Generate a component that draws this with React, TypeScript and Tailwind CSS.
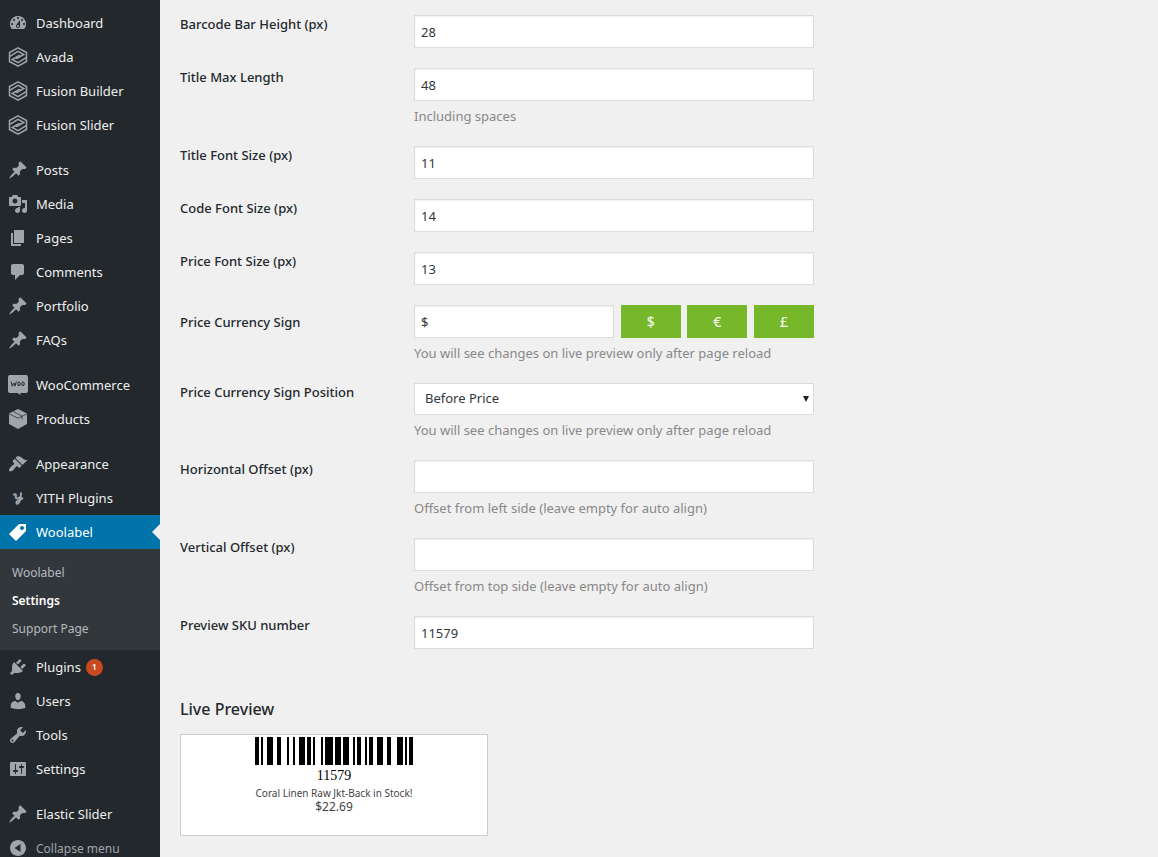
import React from 'react';
import clsx from 'clsx';

const ICONS: Record<string, string> = {
  dashboard:
    'M3.76 16h12.48A7.998 7.998 0 0 0 10 3a7.998 7.998 0 0 0-6.24 13zM10 4c.55 0 1 .45 1 1s-.45 1-1 1-1-.45-1-1 .45-1 1-1zM6 6c.55 0 1 .45 1 1s-.45 1-1 1-1-.45-1-1 .45-1 1-1zm8 0c.55 0 1 .45 1 1s-.45 1-1 1-1-.45-1-1 .45-1 1-1zm-5.37 5.55L12 7v6c0 1.1-.9 2-2 2s-2-.9-2-2c0-.57.24-1.08.63-1.45zM4 10c.55 0 1 .45 1 1s-.45 1-1 1-1-.45-1-1 .45-1 1-1zm12 0c.55 0 1 .45 1 1s-.45 1-1 1-1-.45-1-1 .45-1 1-1zm-5 3c0-.55-.45-1-1-1s-1 .45-1 1 .45 1 1 1 1-.45 1-1z',
  pin: 'M10.44 3.02l1.82-1.82 6.36 6.35-1.83 1.82c-1.05-.68-2.48-.57-3.41.36l-.75.75c-.92.93-1.04 2.35-.35 3.41l-1.83 1.82-2.41-2.41-2.8 2.79c-.42.42-3.38 2.71-3.8 2.29s1.86-3.39 2.28-3.81l2.79-2.79L4.1 9.36l1.83-1.82c1.05.69 2.48.57 3.4-.36l.75-.75c.93-.92 1.05-2.35.36-3.41z',
  media:
    'M13 11V4c0-.55-.45-1-1-1h-1.67L9 1H5L3.67 3H2c-.55 0-1 .45-1 1v7c0 .55.45 1 1 1h10c.55 0 1-.45 1-1zM7 4.5c1.38 0 2.5 1.12 2.5 2.5S8.38 9.5 7 9.5 4.5 8.38 4.5 7 5.62 4.5 7 4.5zM14 6h5v10.5c0 1.38-1.12 2.5-2.5 2.5S14 17.88 14 16.5s1.12-2.5 2.5-2.5c.17 0 .34.02.5.05V9h-3V6zm-4 8.05V13h2v3.5c0 1.38-1.12 2.5-2.5 2.5S7 17.88 7 16.5 8.12 14 9.5 14c.17 0 .34.02.5.05z',
  page: 'M6 15V2h10v13H6zm-1 1h8v2H3V5h2v11z',
  comment: 'M5 2h9c1.1 0 2 .9 2 2v7c0 1.1-.9 2-2 2h-2l-5 5v-5H5c-1.1 0-2-.9-2-2V4c0-1.1.9-2 2-2z',
  brush:
    'M14.48 11.06L7.41 3.99l1.5-1.5c.5-.56 2.3-.47 3.51.32 1.21.8 1.43 1.28 2.91 2.1 1.18.64 2.45 1.26 4.45.85zm-.71.71L6.7 4.7 4.93 6.47c-.39.39-.39 1.02 0 1.41l1.06 1.06c.39.39.39 1.03 0 1.42-.6.6-1.43 1.11-2.21 1.69-.35.26-.7.53-1.01.84C1.43 14.23.4 16.08 1.4 17.07c.99 1 2.84-.03 4.18-1.36.31-.31.58-.66.85-1.02.57-.78 1.08-1.61 1.69-2.21.39-.39 1.02-.39 1.41 0l1.06 1.06c.39.39 1.02.39 1.41 0z',
  tag: 'M11 2h7v7L8 19l-7-7zm3 6c1.1 0 2-.9 2-2s-.9-2-2-2-2 .9-2 2 .9 2 2 2z',
  plug: 'M13.11 4.36L9.87 7.6 8 5.73l3.24-3.24c.35-.34 1.05-.2 1.56.32.52.51.66 1.21.31 1.55zm-8 1.77l.91-1.12 9.01 9.01-1.19.84c-.71.71-2.63 1.16-3.82 1.16H6.14L4.9 17.26c-.59.59-1.54.59-2.12 0-.59-.58-.59-1.53 0-2.12l1.24-1.24v-3.88c0-1.13.4-3.19 1.09-3.89zm7.26 3.97l3.24-3.24c.34-.35 1.04-.21 1.55.31.52.51.66 1.21.31 1.55l-3.24 3.25z',
  user: 'M10 9.25c-2.27 0-2.73-3.44-2.73-3.44C7 4.02 7.82 2 9.97 2c2.16 0 2.98 2.02 2.71 3.81 0 0-.41 3.44-2.68 3.44zm0 2.57L12.72 10c2.39 0 4.52 2.33 4.52 4.53v2.49s-3.65 1.13-7.24 1.13c-3.65 0-7.24-1.13-7.24-1.13v-2.49c0-2.25 1.94-4.48 4.47-4.48z',
  wrench:
    'M16.68 9.77c-1.34 1.34-3.3 1.67-4.95.99l-5.41 6.52c-.99.99-2.59.99-3.58 0s-.99-2.59 0-3.57l6.52-5.42c-.68-1.65-.35-3.61.99-4.95 1.28-1.28 3.12-1.62 4.72-1.06l-2.89 2.89 2.82 2.82 2.86-2.87c.53 1.58.18 3.39-1.08 4.65zM3.81 16.21c.4.39 1.04.39 1.43 0 .4-.4.4-1.04 0-1.43-.39-.4-1.03-.4-1.43 0-.39.39-.39 1.03 0 1.43z',
  sliders:
    'M18 16V4c0-.55-.45-1-1-1H3c-.55 0-1 .45-1 1v12c0 .55.45 1 1 1h14c.55 0 1-.45 1-1zM8 11h1c.55 0 1 .45 1 1s-.45 1-1 1H8v1.5c0 .28-.22.5-.5.5s-.5-.22-.5-.5V13H6c-.55 0-1-.45-1-1s.45-1 1-1h1V5.5c0-.28.22-.5.5-.5s.5.22.5.5V11zm5-2h-1c-.55 0-1-.45-1-1s.45-1 1-1h1V5.5c0-.28.22-.5.5-.5s.5.22.5.5V7h1c.55 0 1 .45 1 1s-.45 1-1 1h-1v5.500c0 .28-.22.5-.5.5s-.5-.22-.5-.5V9z',
  collapse:
    'M10 2c4.42 0 8 3.58 8 8s-3.58 8-8 8-8-3.58-8-8 3.58-8 8-8zm2.5 12V6L6.5 10z',
};

const MenuIcon: React.FC<{ name: string }> = ({ name }) => {
  if (name === 'fusion') {
    return (
      <svg viewBox="0 0 20 20" className="size-5" fill="none" stroke="currentColor" strokeWidth="1.5">
        <path d="M10 .9l8.500 4.600v9L10 19.100l-8.500-4.600v-9z" />
        <path d="M1.800 9.300L10 4.300l5.800 3.200L9 11.400 7.400 10.500" />
        <path d="M18.200 10.700L10 15.700l-5.800-3.200L11 8.600l1.600.9" />
      </svg>
    );
  }
  if (name === 'woo') {
    return (
      <svg viewBox="0 0 20 20" className="size-5">
        <path fill="currentColor" d="M2 0h16a2 2 0 0 1 2 2v14a2 2 0 0 1-2 2h-5.500v2L9.500 18H2a2 2 0 0 1-2-2V2a2 2 0 0 1 2-2z" />
        <g fill="none" stroke="#23282d" strokeWidth="1">
          <path d="M3.200 6.600l1 4.600 1.800-3.200.9 3.200L8.400 6.400" />
          <ellipse cx="11" cy="8.800" rx="1.200" ry="1.900" />
          <ellipse cx="15" cy="8.800" rx="1.200" ry="1.900" />
        </g>
      </svg>
    );
  }
  if (name === 'box') {
    return (
      <svg viewBox="0 0 20 20" className="size-5">
        <path fill="currentColor" d="M10 0l9 4.600v10.400L10 20l-9-5V4.600z" />
        <path fill="none" stroke="#23282d" strokeWidth=".7" d="M1 4.800l9 4.400 9-4.400M5.400 2.600l8.600 4.600v3.200" />
      </svg>
    );
  }
  if (name === 'yith') {
    return (
      <svg viewBox="0 0 20 20" className="size-5" fill="none" strokeLinecap="round">
        <circle cx="10" cy="10" r="7.500" fill="#1f2a36" />
        <path stroke="currentColor" strokeWidth="2" d="M6 6.600c2-1.200 2.200.4 1.800 2.400-.2 2 2.200 2 4 .2M13 5.200c-.2 3.600-.6 9.600-3.200 10.400-1.600.4-2-1.400-.4-2.400 1.400-.9 3.200-1.400 5-3" />
      </svg>
    );
  }
  return (
    <svg viewBox="0 0 20 20" className="size-5" fill="currentColor" fillRule="evenodd">
      <path d={ICONS[name]} />
    </svg>
  );
};

interface MenuEntry {
  label: string;
  icon: string;
  current?: boolean;
  count?: number;
  sub?: string[];
}

const MENU: MenuEntry[][] = [
  [
    { label: 'Dashboard', icon: 'dashboard' },
    { label: 'Avada', icon: 'fusion' },
    { label: 'Fusion Builder', icon: 'fusion' },
    { label: 'Fusion Slider', icon: 'fusion' },
  ],
  [
    { label: 'Posts', icon: 'pin' },
    { label: 'Media', icon: 'media' },
    { label: 'Pages', icon: 'page' },
    { label: 'Comments', icon: 'comment' },
    { label: 'Portfolio', icon: 'pin' },
    { label: 'FAQs', icon: 'pin' },
  ],
  [
    { label: 'WooCommerce', icon: 'woo' },
    { label: 'Products', icon: 'box' },
  ],
  [
    { label: 'Appearance', icon: 'brush' },
    { label: 'YITH Plugins', icon: 'yith' },
    { label: 'Woolabel', icon: 'tag', current: true, sub: ['Woolabel', 'Settings', 'Support Page'] },
    { label: 'Plugins', icon: 'plug', count: 1 },
    { label: 'Users', icon: 'user' },
    { label: 'Tools', icon: 'wrench' },
    { label: 'Settings', icon: 'sliders' },
  ],
  [{ label: 'Elastic Slider', icon: 'pin' }],
];

const Sidebar: React.FC = () => (
  <nav className="w-40 shrink-0 bg-[#23282d] pt-[6px] text-[13px] text-[#eeeeee]">
    <ul className="flex flex-col gap-[11px]">
      {MENU.map((group, i) => (
        <li key={i}>
          <ul>
            {group.map((item) => (
              <li key={item.label}>
                <a
                  href="#"
                  className={clsx(
                    'relative flex h-[34px] items-center gap-2 pl-2',
                    item.current && 'bg-[#0073aa] text-white'
                  )}
                >
                  <span className={item.current ? 'text-white' : 'text-[#a0a5aa]'}>
                    <MenuIcon name={item.icon} />
                  </span>
                  <span className="pt-px">{item.label}</span>
                  {item.count && (
                    <span className="-ml-[3px] flex size-[17px] items-center justify-center rounded-full bg-[#ca4a1f] text-[9px] font-semibold text-white">
                      {item.count}
                    </span>
                  )}
                  {item.current && (
                    <span className="absolute right-0 top-[9px] border-y-8 border-r-8 border-y-transparent border-r-[#f0f0f0]" />
                  )}
                </a>
                {item.sub && (
                  <ul className="bg-[#32373c] pt-[9px] pb-2 text-[12px] text-[#b4b9be]">
                    {item.sub.map((label) => (
                      <li key={label}>
                        <a
                          href="#"
                          className={clsx(
                            'flex h-7 items-center px-3 pt-px',
                            label === 'Settings' && 'font-semibold text-white'
                          )}
                        >
                          {label}
                        </a>
                      </li>
                    ))}
                  </ul>
                )}
              </li>
            ))}
          </ul>
        </li>
      ))}
    </ul>
    <button type="button" className="flex h-[34px] w-full items-center gap-2 pl-2 text-[12px] text-[#a0a5aa]">
      <MenuIcon name="collapse" />
      <span className="pt-px">Collapse menu</span>
    </button>
  </nav>
);

const inputClasses =
  'h-[33px] border border-[#dddddd] bg-white px-[6px] text-[13px] text-[#32373c] shadow-[inset_0_1px_2px_rgba(0,0,0,0.07)]';

interface FieldProps {
  id: string;
  label: string;
  hint?: string;
  middle?: boolean;
  children: React.ReactNode;
}

const Field: React.FC<FieldProps> = ({ id, label, hint, middle, children }) => (
  <div className="flex">
    <label
      htmlFor={id}
      className={clsx('w-[234px] shrink-0 text-[13px] leading-[18px] font-medium', middle && 'pt-2')}
    >
      {label}
    </label>
    <div className="w-full max-w-[400px]">
      {children}
      {hint && <p className="mt-[5px] text-[13px] leading-5 text-[#888888]">{hint}</p>}
    </div>
  </div>
);

const TextField: React.FC<{ id: string; label: string; value: string; hint?: string }> = ({ id, label, value, hint }) => (
  <Field id={id} label={label} hint={hint}>
    <input id={id} type="text" defaultValue={value} className={clsx(inputClasses, 'block w-full')} />
  </Field>
);

// Code 128 widths, alternating bar / space
const BARCODE = '211232' + '231212' + '312113' + '114131' + '321122' + '112232' + '2331112';

const Barcode: React.FC = () => {
  let x = 0;
  const bars: React.ReactNode[] = [];
  BARCODE.split('').forEach((n, i) => {
    const w = Number(n) * 2;
    if (i % 2 === 0) bars.push(<rect key={i} x={x} y="0" width={w} height="28" />);
    x += w;
  });
  return (
    <svg width={x} height="28" viewBox={`0 0 ${x} 28`} shapeRendering="crispEdges" className="block">
      {bars}
    </svg>
  );
};

const App: React.FC = () => (
  <div className="flex h-screen overflow-hidden bg-[#f0f0f0] font-['Noto_Sans','Open_Sans',sans-serif] text-[#23282d]">
    <Sidebar />
    <main className="min-w-0 flex-1 px-5 pt-[15px]">
      <form className="flex flex-col gap-5">
        <TextField id="bar-height" label="Barcode Bar Height (px)" value="28" />
        <TextField id="title-max" label="Title Max Length" value="48" hint="Including spaces" />
        <TextField id="title-size" label="Title Font Size (px)" value="11" />
        <TextField id="code-size" label="Code Font Size (px)" value="14" />
        <TextField id="price-size" label="Price Font Size (px)" value="13" />
        <Field
          id="currency"
          label="Price Currency Sign"
          hint="You will see changes on live preview only after page reload"
          middle
        >
          <div className="flex justify-between">
            <input id="currency" type="text" defaultValue="$" className={clsx(inputClasses, 'w-1/2')} />
            {['$', '€', '£'].map((sign) => (
              <button key={sign} type="button" className="h-[33px] w-[60px] bg-[#76b82a] text-[14px] text-white">
                {sign}
              </button>
            ))}
          </div>
        </Field>
        <Field
          id="position"
          label="Price Currency Sign Position"
          hint="You will see changes on live preview only after page reload"
        >
          <div className="relative">
            <select
              id="position"
              className="block h-8 w-full appearance-none border border-[#dddddd] bg-white px-[10px] text-[13px] text-[#32373c]"
            >
              <option>Before Price</option>
              <option>After Price</option>
            </select>
            <svg viewBox="0 0 6 6" className="pointer-events-none absolute top-[13px] right-[5px] size-[6px]">
              <path d="M0 0h6L3 6z" fill="#222222" />
            </svg>
          </div>
        </Field>
        <TextField id="offset-x" label="Horizontal Offset (px)" value="" hint="Offset from left side (leave empty for auto align)" />
        <TextField id="offset-y" label="Vertical Offset (px)" value="" hint="Offset from top side (leave empty for auto align)" />
        <TextField id="sku" label="Preview SKU number" value="11579" />
      </form>

      <h2 className="mt-12 text-[16px] leading-6 font-medium">Live Preview</h2>
      <div className="mt-[13px] flex h-[102px] max-w-[308px] flex-col items-center border border-[#cccccc] bg-white pt-[2px]">
        <Barcode />
        <div className="mt-[3px] font-['Liberation_Serif',serif] text-[14px] leading-4 text-black">11579</div>
        <div className="mt-[2px] text-[10px] leading-[14px] text-[#444444]">Coral Linen Raw Jkt-Back in Stock!</div>
        <div className="text-[12px] leading-[14px] text-[#444444]">$22.69</div>
      </div>
    </main>
  </div>
);

export default App;
